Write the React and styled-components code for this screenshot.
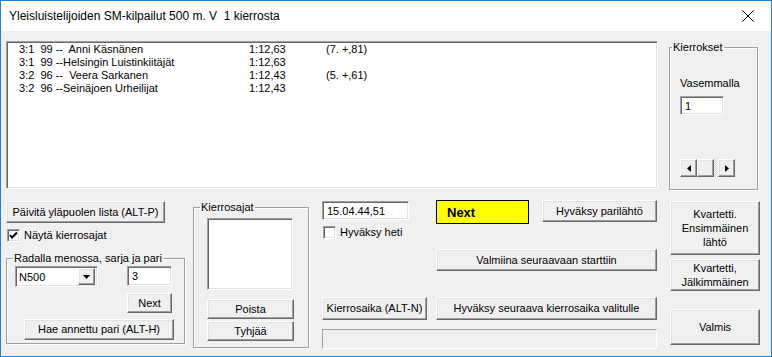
import React from "react";
import styled, { createGlobalStyle, css } from "styled-components";

const rows = [
  { pre: "3:1  99 --  Anni Käsnänen", time: "1:12,63", note: "(7. +,81)" },
  { pre: "3:1  99 --Helsingin Luistinkiitäjät", time: "1:12,63", note: "" },
  { pre: "3:2  96 --  Veera Sarkanen", time: "1:12,43", note: "(5. +,61)" },
  { pre: "3:2  96 --Seinäjoen Urheilijat", time: "1:12,43", note: "" },
];

export default function App() {
  return (
    <>
      <GlobalStyle />
      <Window>
        <TitleBar>
          <Title>Yleisluistelijoiden SM-kilpailut 500 m. V&nbsp; 1 kierrosta</Title>
          <CloseIcon width="12" height="12" viewBox="0 0 12 12">
            <path d="M0.5 0.5 L11.5 11.5 M11.5 0.5 L0.5 11.5" stroke="#000" strokeWidth="1" fill="none" />
          </CloseIcon>
        </TitleBar>
        <Client>
          <TopRow>
            <ListBox>
              {rows.map((r) => (
                <ListRow key={r.pre}>
                  <span>{r.pre}</span>
                  <span>{r.time}</span>
                  <span>{r.note}</span>
                </ListRow>
              ))}
            </ListBox>
            <Group $width={89}>
              <Legend $offset={2}>Kierrokset</Legend>
              <GroupBody $padLeft={10}>
                <Label $top={23}>Vasemmalla</Label>
                <TextField $width={44} $height={19} $top={6}>1</TextField>
                <ScrollBar>
                  <ScrollButton>
                    <svg width="4" height="7" viewBox="0 0 4 7"><path d="M4 0 L0 3.5 L4 7 Z" fill="#000" /></svg>
                  </ScrollButton>
                  <ScrollButton />
                  <ScrollTrack />
                  <ScrollButton>
                    <svg width="4" height="7" viewBox="0 0 4 7"><path d="M0 0 L4 3.5 L0 7 Z" fill="#000" /></svg>
                  </ScrollButton>
                </ScrollBar>
              </GroupBody>
            </Group>
          </TopRow>

          <BottomRow>
            <Column $width={179}>
              <Button $width={159} $height={22} $top={1}>Päivitä yläpuolen lista (ALT-P)</Button>
              <CheckRow $top={6}>
                <CheckBox $checked>
                  <svg width="9" height="9" viewBox="0 0 9 9">
                    <path d="M1 4 L3 6.5 L8 1.5" stroke="#000" strokeWidth="2" fill="none" />
                  </svg>
                </CheckBox>
                Näytä kierrosajat
              </CheckRow>
              <Group $width={179} $top={10} $height={92}>
                <Legend $offset={6}>Radalla menossa, sarja ja pari</Legend>
                <PairGrid>
                  <Select>
                    <span>N500</span>
                    <DropButton>
                      <svg width="7" height="4" viewBox="0 0 7 4"><path d="M0 0 L7 0 L3.5 4 Z" fill="#000" /></svg>
                    </DropButton>
                  </Select>
                  <TextField $width={45} $height={20}>3</TextField>
                  <span />
                  <Button $width={45} $height={20}>Next</Button>
                  <Button $width={150} $height={21} $span $left={9}>Hae annettu pari (ALT-H)</Button>
                </PairGrid>
              </Group>
            </Column>

            <Group $width={116} $top={1} $height={147} $left={8}>
              <Legend $offset={6}>Kierrosajat</Legend>
              <GroupBody $padLeft={13}>
                <WhiteBox $top={4} />
                <Button $width={87} $height={20} $top={9}>Poista</Button>
                <Button $width={87} $height={20} $top={2}>Tyhjää</Button>
              </GroupBody>
            </Group>

            <Operations>
              <OpRow>
                <TextField $width={87} $height={19} $top={1}>15.04.44,51</TextField>
                <OpRight>
                  <NextBadge>Next</NextBadge>
                  <Button $width={115} $height={22}>Hyväksy parilähtö</Button>
                </OpRight>
              </OpRow>
              <CheckRow $top={2}>
                <CheckBox />
                Hyväksy heti
              </CheckRow>
              <OpRow $top={10}>
                <span />
                <Button $width={221} $height={22}>Valmiina seuraavaan starttiin</Button>
              </OpRow>
              <OpRow $top={26}>
                <Button $width={105} $height={23}>Kierrosaika (ALT-N)</Button>
                <Button $width={221} $height={23}>Hyväksy seuraava kierrosaika valitulle</Button>
              </OpRow>
              <StatusBox />
            </Operations>

            <Column $width={90} $left={13}>
              <Button $width={90} $height={54} $top={1}>Kvartetti.<br />Ensimmäinen<br />lähtö</Button>
              <Button $width={90} $height={32} $top={4}>Kvartetti,<br />Jälkimmäinen</Button>
              <Button $width={90} $height={36} $top={18}>Valmis</Button>
            </Column>
          </BottomRow>
        </Client>
      </Window>
    </>
  );
}

const GlobalStyle = createGlobalStyle`
  html, body {
    margin: 0;
    padding: 0;
    background: #f0f0f0;
  }
  body {
    font-family: "Liberation Sans", Arial, sans-serif;
    font-size: 11px;
    color: #000;
  }
`;

const raised = css`
  border: 1px solid;
  border-color: #ffffff #696969 #696969 #ffffff;
  box-shadow: inset -1px -1px #a0a0a0, inset 1px 1px #e3e3e3;
  background: #f0f0f0;
`;

const sunken = css`
  border: 1px solid;
  border-color: #a0a0a0 #ffffff #ffffff #a0a0a0;
  box-shadow: inset 1px 1px #696969, inset -1px -1px #e3e3e3;
`;

const Window = styled.div`
  box-sizing: border-box;
  width: 772px;
  height: 357px;
  border: 1px solid #1883d7;
  display: flex;
  flex-direction: column;
  background: #f0f0f0;
`;

const TitleBar = styled.div`
  height: 30px;
  background: #fff;
  display: flex;
  align-items: center;
  justify-content: space-between;
  padding: 0 17px 0 8px;
`;

const Title = styled.div`
  font-size: 12px;
  font-family: "Liberation Sans", Arial, sans-serif;
`;

const CloseIcon = styled.svg`
  display: block;
`;

const Client = styled.div`
  flex: 1;
  padding: 10px 5px 0;
  display: flex;
  flex-direction: column;
`;

const TopRow = styled.div`
  display: flex;
  gap: 11px;
  height: 149px;
`;

const ListBox = styled.div`
  ${sunken};
  box-sizing: border-box;
  width: 652px;
  height: 148px;
  background: #fff;
  padding: 1px 0 0 12px;
`;

const ListRow = styled.div`
  display: grid;
  grid-template-columns: 230px 77px auto;
  line-height: 13px;
  white-space: pre;
`;

const Group = styled.fieldset`
  box-sizing: border-box;
  margin: ${({ $top = 0 }) => $top}px 0 0 ${({ $left = 0 }) => $left}px;
  padding: 0;
  width: ${({ $width }) => $width}px;
  ${({ $height }) => $height && `height: ${$height}px;`}
  border: 1px solid #a0a0a0;
  box-shadow: inset 1px 1px #fff, 1px 1px #fff;
  min-width: 0;
`;

const Legend = styled.legend`
  margin-left: ${({ $offset }) => $offset}px;
  padding: 0 1px;
  line-height: 13px;
`;

const GroupBody = styled.div`
  display: flex;
  flex-direction: column;
  align-items: flex-start;
  padding-left: ${({ $padLeft }) => $padLeft}px;
`;

const Label = styled.div`
  margin-top: ${({ $top = 0 }) => $top}px;
  line-height: 13px;
`;

const TextField = styled.div`
  ${sunken};
  box-sizing: border-box;
  width: ${({ $width }) => $width}px;
  height: ${({ $height }) => $height}px;
  margin-top: ${({ $top = 0 }) => $top}px;
  background: #fff;
  padding: 0 4px;
  display: flex;
  align-items: center;
`;

const ScrollBar = styled.div`
  margin-top: 44px;
  display: flex;
  height: 18px;
`;

const ScrollButton = styled.div`
  ${raised};
  box-sizing: border-box;
  width: 17px;
  height: 18px;
  display: flex;
  align-items: center;
  justify-content: center;
`;

const ScrollTrack = styled.div`
  width: 4px;
  background: repeating-conic-gradient(#ffffff 0 25%, #d4d4d4 0 50%) 0 0 / 2px 2px;
`;

const Button = styled.div`
  ${raised};
  box-sizing: border-box;
  width: ${({ $width }) => $width}px;
  height: ${({ $height }) => $height}px;
  margin-top: ${({ $top = 0 }) => $top}px;
  margin-left: ${({ $left = 0 }) => $left}px;
  ${({ $span }) => $span && "grid-column: 1 / -1;"}
  display: flex;
  align-items: center;
  justify-content: center;
  text-align: center;
  line-height: 14px;
  padding-bottom: 1px;
`;

const BottomRow = styled.div`
  display: flex;
  align-items: flex-start;
  margin-top: 10px;
`;

const Column = styled.div`
  width: ${({ $width }) => $width}px;
  margin-left: ${({ $left = 0 }) => $left}px;
  display: flex;
  flex-direction: column;
`;

const CheckRow = styled.div`
  display: flex;
  align-items: center;
  gap: 4px;
  margin-top: ${({ $top = 0 }) => $top}px;
  margin-left: 1px;
  line-height: 13px;
`;

const CheckBox = styled.span`
  ${sunken};
  box-sizing: border-box;
  width: 13px;
  height: 13px;
  background: #fff;
  display: flex;
  align-items: center;
  justify-content: center;
`;

const PairGrid = styled.div`
  display: grid;
  grid-template-columns: 83px 45px;
  column-gap: 29px;
  row-gap: 6px;
  padding: 1px 0 0 8px;
`;

const Select = styled.div`
  ${sunken};
  box-sizing: border-box;
  height: 21px;
  background: #fff;
  display: flex;
  align-items: center;
  justify-content: space-between;
  padding: 2px 2px 2px 3px;
`;

const DropButton = styled.div`
  ${raised};
  box-sizing: border-box;
  width: 17px;
  height: 17px;
  display: flex;
  align-items: center;
  justify-content: center;
`;

const WhiteBox = styled.div`
  ${sunken};
  box-sizing: border-box;
  width: 86px;
  height: 72px;
  margin-top: ${({ $top }) => $top}px;
  background: #fff;
`;

const Operations = styled.div`
  width: 335px;
  margin-left: 13px;
  display: flex;
  flex-direction: column;
`;

const OpRow = styled.div`
  display: flex;
  justify-content: space-between;
  align-items: flex-start;
  margin-top: ${({ $top = 0 }) => $top}px;
`;

const OpRight = styled.div`
  width: 221px;
  display: flex;
  justify-content: space-between;
  align-items: flex-start;
`;

const NextBadge = styled.div`
  box-sizing: border-box;
  width: 93px;
  height: 24px;
  background: #ffff00;
  border: 1px solid #000;
  font-weight: bold;
  font-size: 13px;
  padding-left: 10px;
  display: flex;
  align-items: center;
`;

const StatusBox = styled.div`
  box-sizing: border-box;
  height: 20px;
  margin-top: 9px;
  border: 1px solid;
  border-color: #a0a0a0 #ffffff #ffffff #a0a0a0;
`;
